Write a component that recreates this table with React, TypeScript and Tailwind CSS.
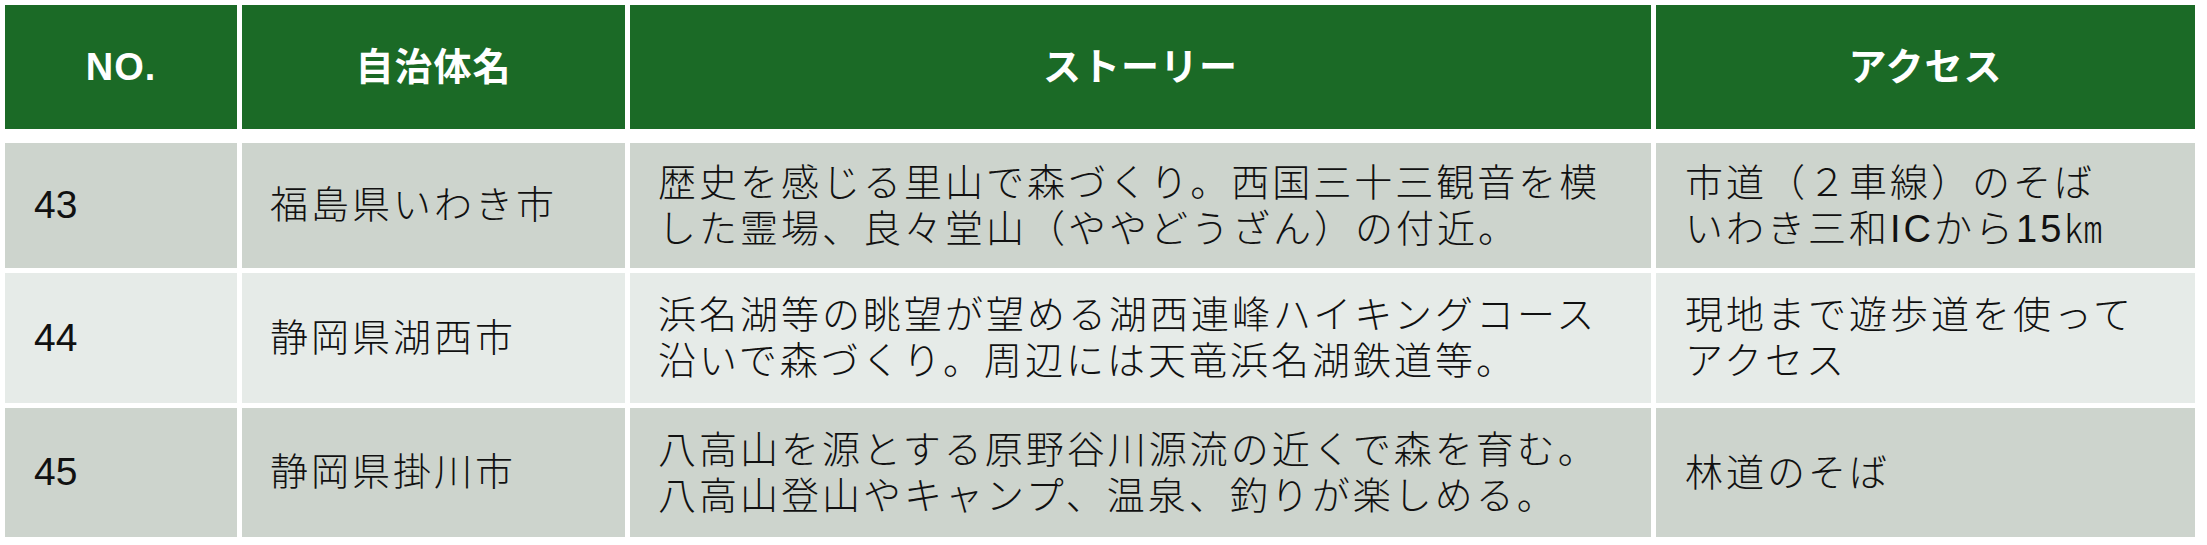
type Row = {
  no: string;
  city: string;
  story: string[];
  access: string[];
  bg: string;
  h: string;
};

const rows: Row[] = [
  {
    no: '43',
    city: '福島県いわき市',
    story: ['歴史を感じる里山で森づくり。西国三十三観音を模', 'した霊場、良々堂山（ややどうざん）の付近。'],
    access: ['市道（２車線）のそば', 'いわき三和ICから15㎞'],
    bg: 'bg-[#cdd4cd]',
    h: 'h-[125px]',
  },
  {
    no: '44',
    city: '静岡県湖西市',
    story: ['浜名湖等の眺望が望める湖西連峰ハイキングコース', '沿いで森づくり。周辺には天竜浜名湖鉄道等。'],
    access: ['現地まで遊歩道を使って', 'アクセス'],
    bg: 'bg-[#e6ebe8]',
    h: 'h-[130px]',
  },
  {
    no: '45',
    city: '静岡県掛川市',
    story: ['八高山を源とする原野谷川源流の近くで森を育む。', '八高山登山やキャンプ、温泉、釣りが楽しめる。'],
    access: ['林道のそば'],
    bg: 'bg-[#cdd4cd]',
    h: 'h-[129px]',
  },
];

const cols = 'grid grid-cols-[232px_383px_1021px_539px] gap-x-[5px]';
const font = "font-['Liberation_Sans','Noto_Sans_CJK_JP',sans-serif]";

function Lines({ lines }: { lines: string[] }) {
  return (
    <div className="leading-[46px]">
      {lines.map((l) => (
        <div key={l} className="whitespace-nowrap">
          {l}
        </div>
      ))}
    </div>
  );
}

export default function App() {
  const head = ['NO.', '自治体名', 'ストーリー', 'アクセス'];

  return (
    <div className={`w-[2207px] h-[545px] bg-white pt-[5px] pl-[5px] ${font}`}>
      {/* header */}
      <div className={`${cols} h-[124px] mb-[14px]`}>
        {head.map((t) => (
          <div
            key={t}
            className="bg-[#1b6a26] flex items-center justify-center text-white font-bold text-[38px] tracking-[1px]"
          >
            {t}
          </div>
        ))}
      </div>

      {/* body */}
      <div className="flex flex-col gap-y-[5px]">
        {rows.map((r) => (
          <div key={r.no} className={`${cols} ${r.h}`}>
            <div className={`${r.bg} flex items-center pl-[29px] text-[39px] text-[#111]`}>{r.no}</div>
            <div className={`${r.bg} flex items-center pl-[28px] text-[38px] tracking-[3px] text-[#111] font-light`}>
              {r.city}
            </div>
            <div className={`${r.bg} flex items-center pl-[28px] text-[38px] tracking-[3px] text-[#111] font-light`}>
              <Lines lines={r.story} />
            </div>
            <div className={`${r.bg} flex items-center pl-[29px] text-[38px] tracking-[3px] text-[#111] font-light`}>
              <Lines lines={r.access} />
            </div>
          </div>
        ))}
      </div>
    </div>
  );
}
